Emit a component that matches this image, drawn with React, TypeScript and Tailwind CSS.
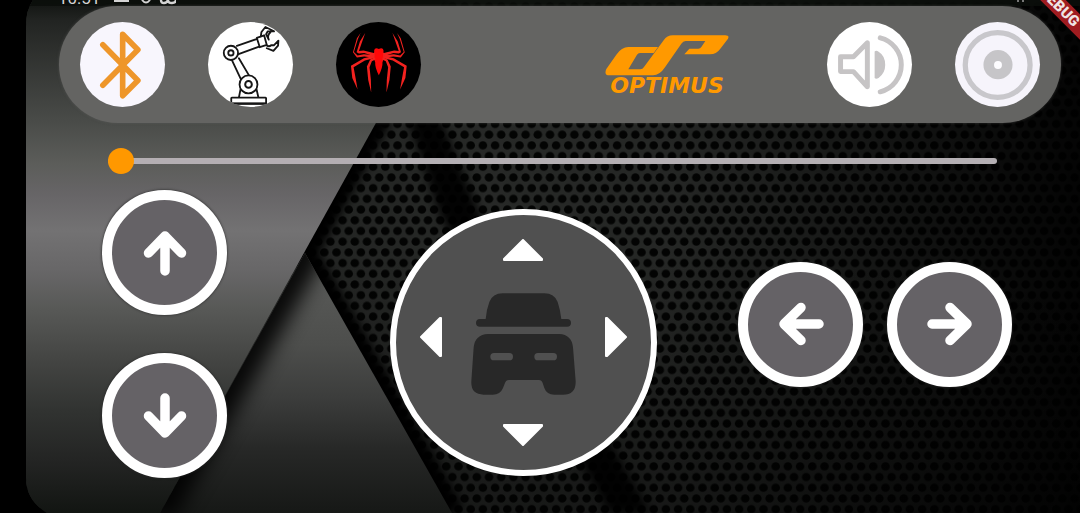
import { useState } from "react";
import type { ReactNode } from "react";

function Backdrop() {
  return (
    <svg
      className="absolute inset-0 h-full w-full"
      viewBox="0 0 1080 513"
      preserveAspectRatio="none"
      aria-hidden="true"
    >
      <defs>
        <pattern id="mesh" width="12.2" height="21.4" patternUnits="userSpaceOnUse" x="464.6" y="140">
          <rect width="12.2" height="21.4" fill="#2b2d2b" />
          <ellipse cx="6.1" cy="5.35" rx="4.3" ry="4.2" fill="#030403" />
          <ellipse cx="0" cy="16.05" rx="4.3" ry="4.2" fill="#030403" />
          <ellipse cx="12.2" cy="16.05" rx="4.3" ry="4.2" fill="#030403" />
        </pattern>
        <linearGradient id="fade" x1="0" x2="1" y1="0" y2="0">
          <stop offset="0.3" stopColor="#000" stopOpacity="0.2" />
          <stop offset="0.45" stopColor="#000" stopOpacity="0.1" />
          <stop offset="0.62" stopColor="#000" stopOpacity="0.15" />
          <stop offset="0.8" stopColor="#000" stopOpacity="0.5" />
          <stop offset="1" stopColor="#000" stopOpacity="0.9" />
        </linearGradient>
        <linearGradient id="floor" x1="0" x2="0" y1="0" y2="1">
          <stop offset="0.5" stopColor="#000" stopOpacity="0" />
          <stop offset="1" stopColor="#000" stopOpacity="0.4" />
        </linearGradient>
        <linearGradient id="metal" x1="0" x2="0" y1="0" y2="513" gradientUnits="userSpaceOnUse">
          <stop offset="0" stopColor="#101310" />
          <stop offset="0.04" stopColor="#222422" />
          <stop offset="0.24" stopColor="#4a4c49" />
          <stop offset="0.32" stopColor="#5c5d5a" />
          <stop offset="0.38" stopColor="#676567" />
          <stop offset="0.45" stopColor="#737273" />
          <stop offset="0.53" stopColor="#676667" />
          <stop offset="0.6" stopColor="#585957" />
          <stop offset="0.7" stopColor="#444543" />
          <stop offset="0.8" stopColor="#313331" />
          <stop offset="0.9" stopColor="#232423" />
          <stop offset="1" stopColor="#121512" />
        </linearGradient>
        <linearGradient id="wedge" x1="0" x2="0" y1="255" y2="513" gradientUnits="userSpaceOnUse">
          <stop offset="0" stopColor="#5c5d5b" />
          <stop offset="0.35" stopColor="#4d4e4c" />
          <stop offset="0.55" stopColor="#3c3d3c" />
          <stop offset="0.75" stopColor="#272827" />
          <stop offset="1" stopColor="#161816" />
        </linearGradient>
        <filter id="soft" x="-30%" y="-30%" width="160%" height="160%">
          <feGaussianBlur stdDeviation="10" />
        </filter>
        <filter id="softer" x="-30%" y="-30%" width="160%" height="160%">
          <feGaussianBlur stdDeviation="5" />
        </filter>
        <clipPath id="wedgeClip">
          <path d="M305 253 L452 513 H160 Z" />
        </clipPath>
        <clipPath id="screen">
          <path d="M33 0 H1080 V513 H47 Q26 500 26 478 V26 Q26 10 33 0 Z" />
        </clipPath>
      </defs>
      <g clipPath="url(#screen)">
        <rect width="1080" height="513" fill="url(#mesh)" />
        <rect width="1080" height="513" fill="url(#fade)" />
        <rect width="1080" height="513" fill="url(#floor)" />
        <path d="M395 80 L425 80 L478 210 L650 513 L610 513 L440 215 Z" fill="#000" opacity="0.9" filter="url(#softer)" />
        <path d="M444 0 L305 253 L452 513" fill="none" stroke="#000" strokeWidth="24" filter="url(#softer)" />
        <path d="M305 253 L452 513 H160 Z" fill="url(#wedge)" />
        <g clipPath="url(#wedgeClip)">
          <path d="M315 235 L155 513" stroke="#000" strokeWidth="38" opacity="0.9" filter="url(#soft)" />
        </g>
        <path d="M0 0 H444 L160 513 H0 Z" fill="url(#metal)" />
        <rect width="1080" height="6" fill="#0b0e0b" opacity="0.85" />
      </g>
    </svg>
  );
}

function StatusBar() {
  return (
    <div className="flex h-1.5 items-end justify-between overflow-hidden pl-8 pr-12 text-neutral-300">
      <div className="flex items-end gap-3">
        <span className="text-[17px] leading-4">10:51</span>
        <svg className="h-1.5 w-16" viewBox="0 0 64 6" fill="none" stroke="currentColor" aria-hidden="true">
          <path d="M2 1H17" strokeWidth="2" />
          <path d="M30 0Q34 5 38 0" strokeWidth="2" />
          <path d="M49 0Q49 3 52 3T56 0Q56 3 60 3T64 0" strokeWidth="2.4" />
        </svg>
      </div>
      <svg className="h-1.5 w-4" viewBox="0 0 16 6" fill="none" stroke="#777" aria-hidden="true">
        <path d="M2 0V2M7 0V2" strokeWidth="2" />
      </svg>
    </div>
  );
}

function RoundIcon({
  label,
  viewBox,
  tone,
  children,
}: {
  label: string;
  viewBox: string;
  tone: string;
  children: ReactNode;
}) {
  return (
    <button type="button" aria-label={label} className={`size-[85px] shrink-0 overflow-hidden rounded-full ${tone}`}>
      <svg className="size-full" viewBox={viewBox} fill="none" strokeLinecap="round" strokeLinejoin="round">
        {children}
      </svg>
    </button>
  );
}

function BluetoothButton() {
  return (
    <RoundIcon label="Bluetooth" viewBox="238 63 257 257" tone="bg-[#f8f6fd]">
      <path
        d="M307 132 L413 240 L367 286 V100 L413 147 L307 254"
        stroke="#ee962a"
        strokeWidth="17"
      />
    </RoundIcon>
  );
}

function RobotArmButton() {
  return (
    <RoundIcon label="Robot arm" viewBox="53 63 256 256" tone="bg-white">
      <g stroke="#161616" strokeWidth="5.5">
        <path d="M140 135 L201 114 M145 160 L207 137" />
        <path d="M200 111 L222 103 L230 132 L209 139 Z" />
        <path d="M212 106 L214 93 L226 78 L252 91 L233 91 L228 100 L236 116 Q230 104 241 94" />
        <path d="M229 133 Q237 139 243 133 L252 133 L265 119 L264 134 L250 150 L230 142" />
        <path d="M125 178 L153 237 M146 172 L176 223" />
        <path d="M151 265 L146 291 M199 265 L205 291" />
        <circle cx="122" cy="156" r="21.5" fill="#fff" />
        <circle cx="122" cy="156" r="8" />
        <circle cx="175" cy="251" r="27" fill="#fff" />
        <circle cx="175" cy="251" r="10" strokeWidth="6" />
        <rect x="123" y="291" width="105" height="18" rx="2" fill="#fff" />
        <path d="M124 309 H227" strokeWidth="7" />
      </g>
    </RoundIcon>
  );
}

function SpiderButton() {
  return (
    <RoundIcon label="Spider" viewBox="437 63 256 256" tone="bg-black">
      <g fill="#f3221f">
        <path d="M552 148 Q554 139 566 144 Q578 139 580 148 Q579 154 582 160 Q584 172 577 184 Q578 200 566 223 Q554 200 555 184 Q548 172 550 160 Q553 154 552 148 Z" fill="#ff0808" />
        {["", "translate(1132 0) scale(-1 1)"].map((side) => (
          <g key={side} transform={side}>
            <path d="M554 157 L520 149 L506 150 L516 122 L525 96 L509 122 L499 154 L506 158 L522 156 L552 166 Z" />
            <path d="M554 163 L521 160 L502 164 L491 153 L503 114 L511 96 L500 112 L488 154 L500 170 L522 167 L551 171 Z" />
            <path d="M553 165 L521 172 L482 195 L486 232 L502 266 L496 232 L490 199 L524 179 L552 172 Z" />
            <path d="M554 169 L540 176 L530 197 L534 238 L543 275 L542 237 L538 199 L545 181 L556 176 Z" />
          </g>
        ))}
      </g>
    </RoundIcon>
  );
}

function SoundButton() {
  return (
    <RoundIcon label="Sound" viewBox="48 63 257 257" tone="bg-white">
      <g stroke="#c6c4c5" strokeWidth="15">
        <path d="M89 168 H128 L170 126 V259 L128 213 H89 Z" />
        <path d="M209 111 A84 84 0 0 1 209 274" />
      </g>
      <path d="M192 152 Q197 147 204 153 Q224 165 224 193 Q224 218 204 232 Q196 237 192 232 Z" fill="#c6c4c5" />
    </RoundIcon>
  );
}

function HornButton() {
  return (
    <RoundIcon label="Horn" viewBox="432 63 257 257" tone="bg-[#f6f4fb]">
      <circle cx="561" cy="193" r="98" stroke="#c8c7cb" strokeWidth="16" />
      <circle cx="562" cy="192" r="44" fill="#c6c5c8" />
      <circle cx="562" cy="193" r="12" fill="#fdfcff" />
    </RoundIcon>
  );
}

function Logo() {
  return (
    <div className="flex flex-col items-center text-[#ff9900]">
      <svg className="h-[41px] w-[124px]" viewBox="44 109 372 123" fill="currentColor" aria-hidden="true">
        <path
          fillRule="evenodd"
          d="M203 145 L190 163 H149 Q143 163 140 168 L114 212 H150 Q157 212 161 205 L220 125 Q230 110 247 110 H405 Q418 110 413 120 L390 150 Q378 167 359 167 H282 L297 150 H324 Q330 150 333 145 L345 127 H286 Q278 127 273 135 L224 206 Q208 230 188 230 H57 Q40 230 48 211 L78 168 Q94 145 114 145 Z"
        />
      </svg>
      <span className="pt-0.5 font-['DejaVu_Sans',sans-serif] text-[22px] font-bold italic leading-4">OPTIMUS</span>
    </div>
  );
}

const turns = { up: 0, right: 90, down: 180, left: 270 };
type Direction = keyof typeof turns;

function ArrowButton({ direction, label }: { direction: Direction; label: string }) {
  return (
    <button
      type="button"
      aria-label={label}
      className="flex size-[125px] shrink-0 items-center justify-center rounded-full border-10 border-white bg-[#656266] shadow-[0_0_2px_1px_rgba(40,40,40,0.5)]"
    >
      <svg
        className="size-12"
        viewBox="0 0 48 48"
        fill="none"
        stroke="#fff"
        strokeWidth="9.5"
        strokeLinecap="round"
        strokeLinejoin="round"
      >
        <path d="M24 42 V8 M7.5 24 L24 7 L40.5 24" transform={`rotate(${turns[direction]} 24 24)`} />
      </svg>
    </button>
  );
}

function PadButton({ direction, place }: { direction: Direction; place: string }) {
  const upright = direction === "up" || direction === "down";
  const shapes: Record<Direction, string> = {
    up: "M20 1 L39 20 V21 H1 V20 Z",
    down: "M1 1 H39 V2 L20 21 L1 2 Z",
    left: "M1 20 L20 1 H21 V39 H20 Z",
    right: "M1 1 H2 L21 20 L2 39 H1 Z",
  };
  return (
    <button type="button" aria-label={`Drive ${direction}`} className={place}>
      <svg
        className={upright ? "h-[22px] w-10" : "h-10 w-[22px]"}
        viewBox={upright ? "0 0 40 22" : "0 0 22 40"}
        fill="#fff"
        stroke="#fff"
        strokeWidth="2"
        strokeLinejoin="round"
      >
        <path d={shapes[direction]} />
      </svg>
    </button>
  );
}

function DrivePad() {
  return (
    <div className="mt-4 grid size-[267px] shrink-0 grid-cols-[22px_1fr_22px] grid-rows-[22px_1fr_22px] place-items-center rounded-full border-6 border-white bg-[#505050] p-6">
      <PadButton direction="up" place="col-start-2 row-start-1" />
      <PadButton direction="left" place="col-start-1 row-start-2 mb-2.5" />
      <button type="button" aria-label="Stealth mode" className="col-start-2 row-start-2 mt-1">
        <svg className="h-[102px] w-[105px]" viewBox="270 281 315 304" fill="#282828">
          <path d="M314 358 Q316 331 325 307 Q335 281 365 281 H490 Q520 281 530 307 Q538 331 541 358 H558 Q570 358 570 370 Q570 381 558 381 H297 Q285 381 285 370 Q285 358 297 358 Z" />
          <path
            fillRule="evenodd"
            d="M321 403 H535 Q572 405 576 443 L584 545 Q585 585 546 585 H520 Q497 585 490 565 L485 550 Q482 541 474 541 H383 Q375 541 372 550 L366 565 Q358 585 335 585 H308 Q269 585 271 545 L278 443 Q282 405 321 403 Z M339 460 Q328 460 328 471 Q328 482 339 482 H385 Q396 482 396 471 Q396 460 385 460 Z M471 460 Q460 460 460 471 Q460 482 471 482 H517 Q528 482 528 471 Q528 460 517 460 Z"
          />
        </svg>
      </button>
      <PadButton direction="right" place="col-start-3 row-start-2 mb-2.5" />
      <PadButton direction="down" place="col-start-2 row-start-3" />
    </div>
  );
}

export default function App() {
  const [speed, setSpeed] = useState(0);
  return (
    <div className="relative min-h-screen overflow-hidden bg-black pl-[26px] font-['Roboto',sans-serif]">
      <Backdrop />
      <div className="relative">
        <StatusBar />
        <header className="ml-[33px] mr-[19px] flex items-center rounded-full bg-[#646462] px-[21px] py-4 shadow-[0_0_3px_rgba(100,100,98,0.5)]">
          <div className="flex gap-[43px]">
            <BluetoothButton />
            <RobotArmButton />
            <SpiderButton />
          </div>
          <div className="ml-auto mr-[98px]">
            <Logo />
          </div>
          <div className="flex gap-[43px]">
            <SoundButton />
            <HornButton />
          </div>
        </header>
        <main className="pb-8 pl-[76px] pr-[68px] pt-6">
          <div className="ml-1.5 mr-[15px] flex h-7 items-center">
            <input
              type="range"
              min={0}
              max={255}
              value={speed}
              onChange={(event) => setSpeed(Number(event.target.value))}
              aria-label="Speed"
              className="h-[26px] w-full appearance-none bg-transparent [&::-webkit-slider-runnable-track]:h-1.5 [&::-webkit-slider-runnable-track]:rounded-full [&::-webkit-slider-runnable-track]:bg-[#b4afb3] [&::-webkit-slider-thumb]:-mt-2.5 [&::-webkit-slider-thumb]:size-[26px] [&::-webkit-slider-thumb]:appearance-none [&::-webkit-slider-thumb]:rounded-full [&::-webkit-slider-thumb]:bg-[#ff9800]"
            />
          </div>
          <div className="mt-[15px] flex items-center">
            <div className="flex flex-col gap-[38px]">
              <ArrowButton direction="up" label="Raise" />
              <ArrowButton direction="down" label="Lower" />
            </div>
            <div className="flex-[2]" />
            <DrivePad />
            <div className="flex-1" />
            <div className="mb-5 flex gap-6">
              <ArrowButton direction="left" label="Turn left" />
              <ArrowButton direction="right" label="Turn right" />
            </div>
          </div>
        </main>
      </div>
      <div className="pointer-events-none absolute -right-10 -top-0.5 flex h-[18px] w-[120px] rotate-45 items-center justify-center bg-[#a01c20] text-[15px] font-black leading-none text-[#f0e4e4]">
        DEBUG
      </div>
    </div>
  );
}
